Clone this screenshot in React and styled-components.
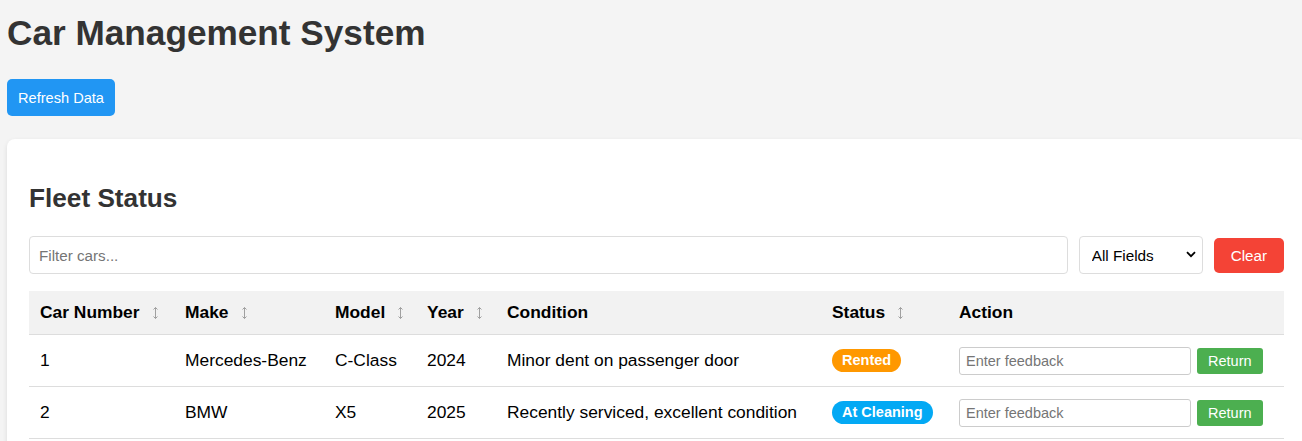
import React, { useState } from "react";
import styled, { createGlobalStyle } from "styled-components";

const GlobalStyle = createGlobalStyle`
  html, body {
    margin: 0;
    padding: 0;
    overflow: hidden;
    background-color: #f4f4f4;
    font-family: "Liberation Sans", Arial, sans-serif;
    color: #333;
  }
`;

const Page = styled.div`
  padding: 13px 0 0 7px;
`;

const Title = styled.h1`
  margin: 0 0 26px 0;
  font-size: 35.2px;
  line-height: 40px;
  font-weight: bold;
  color: #333;
`;

const Button = styled.button`
  height: ${(p) => p.h}px;
  padding: 0 ${(p) => p.px}px;
  border: none;
  border-radius: ${(p) => p.radius || 5}px;
  background-color: ${(p) => p.bg};
  color: #fff;
  font-family: "Liberation Sans", Arial, sans-serif;
  font-size: ${(p) => p.fs}px;
  cursor: pointer;
  white-space: nowrap;
`;

const Card = styled.div`
  box-sizing: border-box;
  width: 1299px;
  margin-top: 23px;
  padding: 22px 22px 40px;
  background: #fff;
  border-radius: 8px;
  box-shadow: 0 2px 5px rgba(0, 0, 0, 0.1);
`;

const SectionTitle = styled.h2`
  margin: 22px 0 23px;
  font-size: 26.2px;
  line-height: 30px;
  font-weight: bold;
  color: #333;
`;

const FilterRow = styled.div`
  display: flex;
  align-items: center;
  gap: 11px;
  margin-bottom: 17px;
`;

const FilterInput = styled.input`
  flex: 1;
  box-sizing: border-box;
  height: 38px;
  padding: 0 9px;
  border: 1px solid #ddd;
  border-radius: 4px;
  font-family: "Liberation Sans", Arial, sans-serif;
  font-size: 15.2px;
  color: #333;
  &::placeholder {
    color: #757575;
  }
`;

const SelectWrap = styled.div`
  position: relative;
  width: 124px;
  height: 38px;
`;

const Select = styled.select`
  appearance: none;
  box-sizing: border-box;
  width: 100%;
  height: 100%;
  padding: 0 0 0 12px;
  border: 1px solid #ddd;
  border-radius: 4px;
  background: #fff;
  font-family: "Liberation Sans", Arial, sans-serif;
  font-size: 15.3px;
  color: #000;
`;

const Chevron = styled.svg`
  position: absolute;
  right: 7px;
  top: 15px;
  pointer-events: none;
`;

const Table = styled.table`
  width: 100%;
  table-layout: fixed;
  border-collapse: collapse;
  color: #000;
  font-size: 17.4px;
`;

const Th = styled.th`
  height: 43px;
  padding: 0 11px;
  background-color: #f2f2f2;
  border-bottom: 1px solid #ddd;
  text-align: left;
  font-weight: bold;
  white-space: nowrap;
`;

const Td = styled.td`
  height: 51px;
  padding: 0 11px;
  border-bottom: 1px solid #ddd;
  white-space: nowrap;
  vertical-align: middle;
`;

const SortIcon = styled.svg`
  margin-left: 12px;
  vertical-align: -2px;
`;

const Badge = styled.span`
  display: inline-block;
  padding: 3px 10px;
  border-radius: 12px;
  background-color: ${(p) => p.color};
  color: #fff;
  font-size: 14.5px;
  line-height: 17px;
  font-weight: bold;
`;

const ActionBox = styled.div`
  display: flex;
  align-items: center;
  gap: 6px;
`;

const FeedbackInput = styled.input`
  box-sizing: border-box;
  width: 232px;
  height: 28px;
  padding: 0 6px;
  border: 1px solid #ccc;
  border-radius: 3px;
  font-family: "Liberation Sans", Arial, sans-serif;
  font-size: 14.5px;
  &::placeholder {
    color: #757575;
  }
`;

const columns = [
  { label: "Car Number", width: 145, sort: true },
  { label: "Make", width: 150, sort: true },
  { label: "Model", width: 92, sort: true },
  { label: "Year", width: 80, sort: true },
  { label: "Condition", width: 325 },
  { label: "Status", width: 127, sort: true },
  { label: "Action", width: 336 },
];

const cars = [
  {
    id: 1,
    make: "Mercedes-Benz",
    model: "C-Class",
    year: 2024,
    condition: "Minor dent on passenger door",
    status: "Rented",
  },
  {
    id: 2,
    make: "BMW",
    model: "X5",
    year: 2025,
    condition: "Recently serviced, excellent condition",
    status: "At Cleaning",
  },
];

const statusColors = {
  Rented: "#ff9800",
  "At Cleaning": "#03a9f4",
};

function Sort() {
  return (
    <SortIcon width="7" height="14" viewBox="0 0 7 14" fill="none" stroke="#a0a0a0" strokeWidth="1">
      <path d="M3.5 1.5 V12.5" />
      <path d="M1.5 3.5 L3.5 1.5 L5.5 3.5" />
      <path d="M1.5 10.5 L3.5 12.5 L5.5 10.5" />
    </SortIcon>
  );
}

export default function App() {
  const [filter, setFilter] = useState("");
  const [field, setField] = useState("all");

  return (
    <>
      <GlobalStyle />
      <Page>
        <Title>Car Management System</Title>
        <Button bg="#2196f3" h={37} px={11} fs={14.6}>
          Refresh Data
        </Button>

        <Card>
          <SectionTitle>Fleet Status</SectionTitle>
          <FilterRow>
            <FilterInput
              placeholder="Filter cars..."
              value={filter}
              onChange={(e) => setFilter(e.target.value)}
            />
            <SelectWrap>
              <Select value={field} onChange={(e) => setField(e.target.value)}>
                <option value="all">All Fields</option>
                <option value="make">Make</option>
                <option value="model">Model</option>
              </Select>
              <Chevron width="10" height="7" viewBox="0 0 10 7" fill="none" stroke="#000" strokeWidth="1.8">
                <path d="M1 1.2 L5 5.2 L9 1.2" />
              </Chevron>
            </SelectWrap>
            <Button bg="#f44336" h={35} px={17} fs={15.2} onClick={() => setFilter("")}>
              Clear
            </Button>
          </FilterRow>

          <Table>
            <colgroup>
              {columns.map((c) => (
                <col key={c.label} style={{ width: c.width }} />
              ))}
            </colgroup>
            <thead>
              <tr>
                {columns.map((c) => (
                  <Th key={c.label}>
                    {c.label}
                    {c.sort && <Sort />}
                  </Th>
                ))}
              </tr>
            </thead>
            <tbody>
              {cars.map((car) => (
                <tr key={car.id}>
                  <Td>{car.id}</Td>
                  <Td>{car.make}</Td>
                  <Td>{car.model}</Td>
                  <Td>{car.year}</Td>
                  <Td>{car.condition}</Td>
                  <Td>
                    <Badge color={statusColors[car.status]}>{car.status}</Badge>
                  </Td>
                  <Td>
                    <ActionBox>
                      <FeedbackInput placeholder="Enter feedback" />
                      <Button bg="#4caf50" h={26} px={11} fs={14.5} radius={3}>
                        Return
                      </Button>
                    </ActionBox>
                  </Td>
                </tr>
              ))}
            </tbody>
          </Table>
        </Card>
      </Page>
    </>
  );
}
